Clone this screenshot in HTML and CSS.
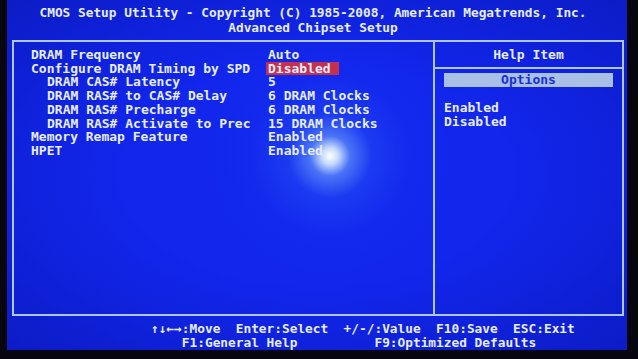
FILE: index.html
```html
<!DOCTYPE html>
<html lang="en">
<head>
    <meta charset="UTF-8">
    <meta name="viewport" content="width=device-width, initial-scale=1.0">
    <title>CMOS Setup Utility</title>
    <link rel="stylesheet" href="styles.css">
</head>
<body>
    <div class="screen">
        <div class="header">
            <div class="title">CMOS Setup Utility - Copyright (C) 1985-2008, American Megatrends, Inc.</div>
            <div class="title">Advanced Chipset Setup</div>
        </div>

        <div class="frame">
            <div class="settings">
                <div class="row"><span class="label">DRAM Frequency</span><span class="value">Auto</span></div>
                <div class="row"><span class="label">Configure DRAM Timing by SPD</span><span class="value selected">Disabled</span></div>
                <div class="row"><span class="label sub">DRAM CAS# Latency</span><span class="value">5</span></div>
                <div class="row"><span class="label sub">DRAM RAS# to CAS# Delay</span><span class="value">6 DRAM Clocks</span></div>
                <div class="row"><span class="label sub">DRAM RAS# Precharge</span><span class="value">6 DRAM Clocks</span></div>
                <div class="row"><span class="label sub">DRAM RAS# Activate to Prec</span><span class="value">15 DRAM Clocks</span></div>
                <div class="row"><span class="label">Memory Remap Feature</span><span class="value">Enabled</span></div>
                <div class="row"><span class="label">HPET</span><span class="value">Enabled</span></div>
            </div>

            <div class="help">
                <div class="help-title">Help Item</div>
                <div class="help-body">
                    <div class="options">Options</div>
                    <div class="help-list">
                        <div>Enabled</div>
                        <div>Disabled</div>
                    </div>
                </div>
            </div>
        </div>

        <div class="footer">
            <div class="keys">↑↓←→:Move  Enter:Select  +/-/:Value  F10:Save  ESC:Exit</div>
            <div class="keys">    F1:General Help          F9:Optimized Defaults</div>
        </div>
    </div>
</body>
</html>
```

FILE: styles.css
```css
body {
    margin: 0;
    background: #07060f;
    width: 638px;
    height: 359px;
    overflow: hidden;
}
.screen {
    margin-left: 7px;
    width: 620px;
    height: 350px;
    display: flex;
    flex-direction: column;
    font-family: "DejaVu Sans Mono", "Liberation Mono", monospace;
    font-weight: bold;
    color: #e6edff;
    background:
        radial-gradient(circle at 323px 156px, rgba(255,255,255,1) 0, rgba(220,240,255,0.9) 8px, rgba(120,180,255,0.55) 20px, rgba(50,110,255,0.28) 42px, rgba(30,70,255,0.1) 80px, rgba(30,60,255,0) 130px),
        radial-gradient(ellipse at 50% 50%, #1226ec 45%, #0c1cc6 100%);
}
.header {
    padding-top: 5px;
    height: 35px;
    text-align: center;
    font-size: 12.8px;
    line-height: 15px;
    padding-right: 8px;
}
.frame {
    margin-left: 5px;
    margin-right: 3px;
    height: 276px;
    box-sizing: border-box;
    border: 2px solid #adc6ff;
    display: flex;
}
.settings {
    width: 419px;
    padding: 6px 0 0 17px;
    box-sizing: border-box;
    font-size: 13px;
    line-height: 13.7px;
}
.row {
    display: flex;
    white-space: pre;
}
.label {
    width: 237px;
}
.label.sub {
    padding-left: 16px;
    width: 221px;
}
.value.selected {
    background: #c4304e;
    margin-left: -2px;
    padding: 0 8px 0 2px;
}
.help {
    flex: 1;
    border-left: 2px solid #adc6ff;
    display: flex;
    flex-direction: column;
    font-size: 13px;
}
.help-title {
    height: 25px;
    line-height: 25px;
    text-align: center;
    border-bottom: 2px solid #adc6ff;
}
.help-body {
    padding: 4px 9px 0 9px;
}
.options {
    background: #a8bfe6;
    color: #1a30d8;
    text-align: center;
    height: 14px;
    line-height: 14px;
}
.help-list {
    margin-top: 14px;
    line-height: 14px;
}
.footer {
    padding: 6px 0 0 144px;
    font-size: 12.8px;
    line-height: 14px;
}
.keys {
    white-space: pre;
}
```
